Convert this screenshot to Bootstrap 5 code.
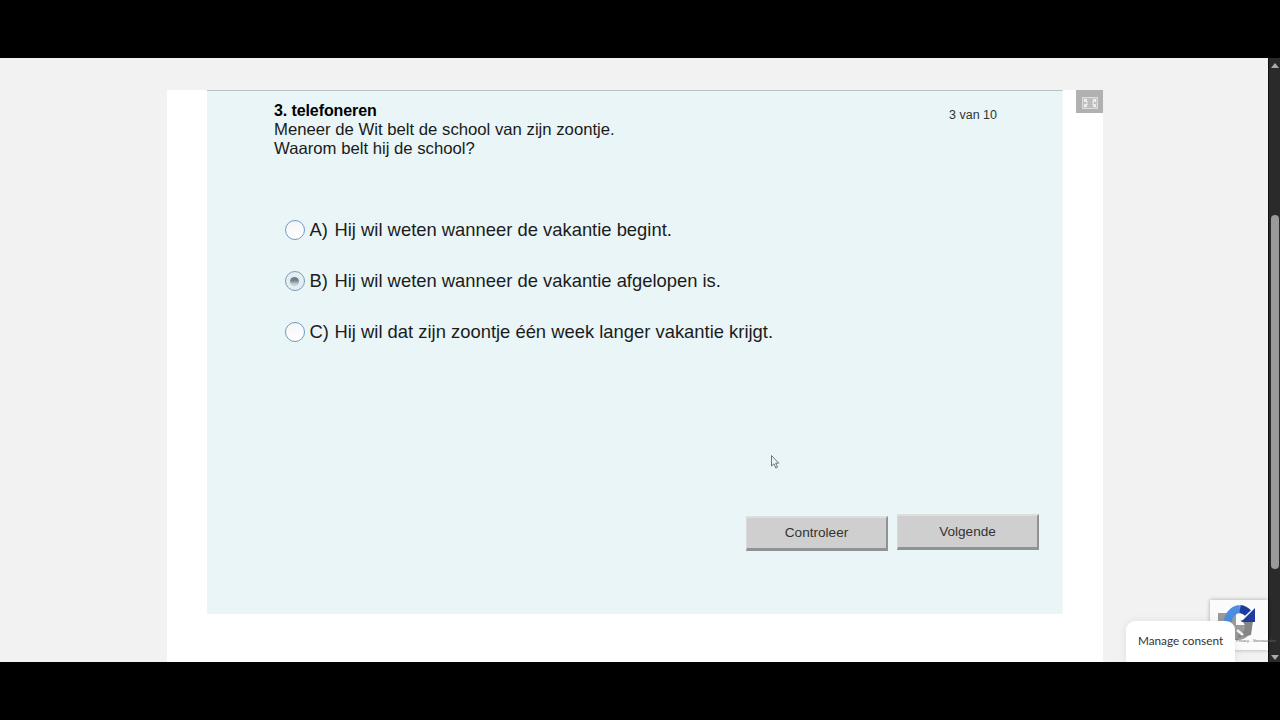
<!DOCTYPE html>
<html lang="nl">
<head>
<meta charset="utf-8">
<title>Quiz</title>
<link href="https://cdn.jsdelivr.net/npm/bootstrap@5.3.0/dist/css/bootstrap.min.css" rel="stylesheet">
<style>
html,body{height:720px;overflow:hidden;background:#000;font-family:"Liberation Sans",Arial,sans-serif}
.frame-bar{height:58px;background:#000}
.frame-mid{height:604px;position:relative;overflow:hidden}
.page-area{background:#f2f2f2;width:1268px;padding-top:31.500px;padding-left:167px}
.paper{width:936px;height:573px;background:#fff;padding-left:40px}
.quiz-panel{width:856px;height:524px;background:#e9f5f6;border-top:1px solid #b4c4c6;border-right:1px solid #f1f6f6;display:flex;flex-direction:column;color:#1c1c1c}
.quiz-head{padding:10.500px 65px 0 67px;height:114.500px}
.quiz-title{font-size:16px;line-height:19px;font-weight:700;color:#000;letter-spacing:-.1px}
.quiz-q{font-size:16.720px;line-height:19px;color:#1a1a1a}
.quiz-count{font-size:12.500px;line-height:16px;color:#333;margin-top:6px}
.quiz-opts{padding-left:77.500px;height:309px}
.quiz-opt{height:51px;font-size:18.400px;line-height:22px;gap:5px;align-items:center;display:flex;padding-bottom:2px}
.opt-key{width:20px;white-space:nowrap}
.opt-radio{width:20px;height:20px;border-radius:50%;border:1.5px solid #6f9ac6;background:linear-gradient(#f4f6f8,#fff);display:flex;align-items:center;justify-content:center;margin-top:1px;flex:none}
.opt-radio.is-on{border-color:#7d9cb5;background:#e4eef2}
.opt-dot{width:9px;height:9px;border-radius:50%;background:linear-gradient(#6b7f8e 35%,#c4cfd6 80%)}
.quiz-actions{padding-left:539px;gap:9px;align-items:flex-end}
.quiz-btn{width:142px;background:#cfcfcf;border:0;border-top:2px solid #dedede;border-left:1px solid #dadada;border-right:2px solid #8f9393;border-bottom:3px solid #8f9393;font-size:13.600px;color:#333;padding:0;border-radius:0}
.quiz-btn.b-one{height:35px;line-height:30px}
.quiz-btn.b-two{height:36px;line-height:30px;margin-bottom:1px}
.fs-btn{position:absolute;left:1076px;top:31.500px;width:27px;height:23.500px;background:#b1b1b1;display:flex;align-items:center;justify-content:center;padding-top:3px}
.scroll-track{position:absolute;right:0;top:0;width:12px;height:604px;background:#2a2a2a;border-left:1px solid #111}
.scroll-thumb{position:absolute;left:2px;top:157px;width:8px;height:354px;background:#9a9a9a;border-radius:4px}
.scroll-up,.scroll-down{position:absolute;left:2px;width:0;height:0;border-left:4px solid transparent;border-right:4px solid transparent}
.scroll-up{top:5px;border-bottom:5px solid #aaa}
.scroll-down{bottom:2px;border-top:5px solid #aaa}
.recap{position:absolute;left:1210px;top:542px;width:58px;height:50px;background:#fbfbfb;box-shadow:0 0 4px rgba(0,0,0,.3);padding:5px 0 0 8px}
.recap-links{position:absolute;left:26px;top:38px;font-size:4px;line-height:5px;color:#666;white-space:nowrap}
.consent{position:absolute;left:1126px;top:563px;width:109px;height:41px;background:#fff;border-radius:9px 9px 0 0;box-shadow:0 0 8px rgba(0,0,0,.08);font-family:Lato,sans-serif;font-size:11.800px;color:#333;display:flex;align-items:center;justify-content:center;padding-bottom:2px}
.mouse-arrow{position:absolute;left:771px;top:397px}
</style>
</head>
<body>
<div class="frame-bar"></div>
<div class="frame-mid">
  <div class="page-area">
    <div class="paper">
      <div class="quiz-panel">
        <div class="quiz-head d-flex justify-content-between">
          <div>
            <div class="quiz-title">3. telefoneren</div>
            <div class="quiz-q">Meneer de Wit belt de school van zijn zoontje.</div>
            <div class="quiz-q">Waarom belt hij de school?</div>
          </div>
          <div class="quiz-count">3 van 10</div>
        </div>
        <div class="quiz-opts">
          <div class="quiz-opt"><span class="opt-radio"></span><span class="opt-key">A)</span><span>Hij wil weten wanneer de vakantie begint.</span></div>
          <div class="quiz-opt"><span class="opt-radio is-on"><span class="opt-dot"></span></span><span class="opt-key">B)</span><span>Hij wil weten wanneer de vakantie afgelopen is.</span></div>
          <div class="quiz-opt"><span class="opt-radio"></span><span class="opt-key">C)</span><span>Hij wil dat zijn zoontje één week langer vakantie krijgt.</span></div>
        </div>
        <div class="quiz-actions d-flex">
          <button type="button" class="btn quiz-btn b-one">Controleer</button>
          <button type="button" class="btn quiz-btn b-two">Volgende</button>
        </div>
      </div>
    </div>
  </div>
  <div class="fs-btn" aria-label="Volledig scherm">
    <svg width="16" height="12" viewBox="0 0 16 12"><rect x=".6" y=".6" width="14.800" height="10.800" fill="#bcbcbc" stroke="#dcdcdc" stroke-width="1.200"/><path d="M2 2h3.500L4.300 3.200 6 4.800 4.800 6 3.200 4.300 2 5.500zM14 2h-3.500l1.200 1.200L10 4.800 11.200 6l1.600-1.700L14 5.500zM2 10h3.500L4.300 8.800 6 7.200 4.800 6 3.200 7.700 2 6.500zM14 10h-3.500l1.200-1.200L10 7.200 11.200 6l1.600 1.700L14 6.500z" fill="#f2f2f2"/></svg>
  </div>
  <svg class="mouse-arrow" width="9" height="14" viewBox="0 0 9 14"><path d="M.5.500v10.500l2.500-2.200 1.800 4.200 1.700-.8-1.800-4h3z" fill="#e9f5f6" stroke="#555" stroke-width=".8"/></svg>
  <div class="scroll-track"><span class="scroll-up"></span><span class="scroll-thumb"></span><span class="scroll-down"></span></div>
  <div class="recap">
    <svg width="40" height="42" viewBox="0 0 40 42"><path d="M0 8h18v12h16v2a14 14 0 0 1-14 13H0z" fill="#9c9c9c"/><path d="M11 15l7 7-3 3-7-7z" fill="#b0b0b0"/><path d="M22 15a8 8 0 0 1 5 7 8 8 0 0 1-6 7l-2 4 14-3 2-14z" fill="#858585"/><path d="M10 17A13 13 0 0 1 22 4" stroke="#4a8fe0" stroke-width="8" fill="none"/><path d="M22 4A13 13 0 0 1 30 8" stroke="#1d3c9e" stroke-width="8" fill="none"/><path d="M37 3v14H23z" fill="#1d3c9e"/><path d="M19 25l6 5" stroke="#f2f2f2" stroke-width="2.500"/></svg>
    <span class="recap-links">Privacy - Voorwaarden</span>
  </div>
  <div class="consent">Manage consent</div>
</div>
<div class="frame-bar"></div>
<script src="https://cdn.jsdelivr.net/npm/bootstrap@5.3.0/dist/js/bootstrap.bundle.min.js"></script>
</body>
</html>
